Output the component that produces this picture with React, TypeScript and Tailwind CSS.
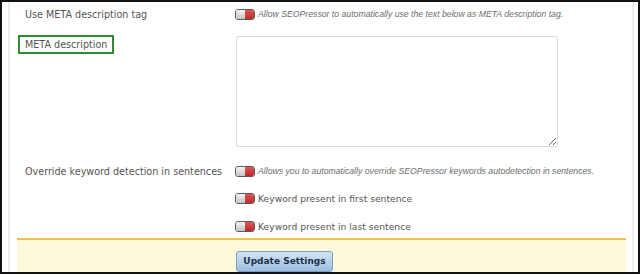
import React from "react";

const Toggle = () => (
  <span className="flex h-[11px] w-[20px] shrink-0 overflow-hidden rounded-[3px] border border-[#5a5a5a]">
    <span className="h-full w-1/2 bg-gradient-to-b from-[#f4f4f4] to-[#c4c4c4]" />
    <span className="h-full w-1/2 bg-gradient-to-b from-[#e05555] to-[#b82a2a]" />
  </span>
);

const label = "text-[9.6px] leading-[13px] text-[#555] [font-family:'DejaVu_Sans',Verdana,sans-serif]";
const hint = "text-[8.7px] leading-[13px] italic text-[#6e6e6e] [font-family:'Liberation_Sans',Arial,sans-serif]";
const option = "text-[9.2px] leading-[13px] text-[#555] [font-family:'DejaVu_Sans',Verdana,sans-serif]";

export default function App() {
  return (
    <div className="h-[274px] w-[640px] overflow-hidden border-2 border-[#111] bg-white">
      <div className="ml-[6px] mr-[4px] flex h-full flex-col border-x-2 border-[#ececec] pt-[6px]">
        {/* settings rows */}
        <div className="flex h-[14px] items-center">
          <div className={`w-[225px] pl-[15px] ${label}`}>Use META description tag</div>
          <Toggle />
          <span className={`ml-[3px] ${hint}`}>
            Allow SEOPressor to automatically use the text below as META description tag.
          </span>
        </div>

        <div className="mt-[13px] flex items-start">
          <div className="flex w-[226px] pl-[8px]">
            <div className={`border-2 border-[#2e8b2e] px-[5px] py-[1px] ${label}`}>META description</div>
          </div>
          <textarea className="mt-[1px] h-[111px] w-[322px] resize-y rounded-[2px] border border-[#dcdcdc] bg-white" />
        </div>

        <div className="mt-[18px] flex h-[14px] items-center">
          <div className={`w-[225px] pl-[15px] ${label}`}>Override keyword detection in sentences</div>
          <Toggle />
          <span className={`ml-[3px] ${hint}`}>
            Allows you to automatically override SEOPressor keywords autodetection in sentences.
          </span>
        </div>

        <div className="mt-[14px] flex h-[14px] items-center pl-[225px]">
          <Toggle />
          <span className={`ml-[3px] ${option}`}>Keyword present in first sentence</span>
        </div>

        <div className="mt-[14px] flex h-[14px] items-center pl-[225px]">
          <Toggle />
          <span className={`ml-[3px] ${option}`}>Keyword present in last sentence</span>
        </div>

        {/* footer */}
        <div className="ml-[7px] mr-[6px] mt-[5px] flex-1 border-t-2 border-[#f0c24a] bg-[#fff9dc] pl-[219px] pt-[6px]">
          <button className="h-[21px] w-[97px] rounded-[3px] border border-[#7e9fc4] bg-gradient-to-b from-[#d3e4f4] to-[#9cbedf] text-[9px] font-bold leading-none text-[#1f2f4d] [font-family:'DejaVu_Sans',Verdana,sans-serif]">
            Update Settings
          </button>
        </div>
      </div>
    </div>
  );
}
